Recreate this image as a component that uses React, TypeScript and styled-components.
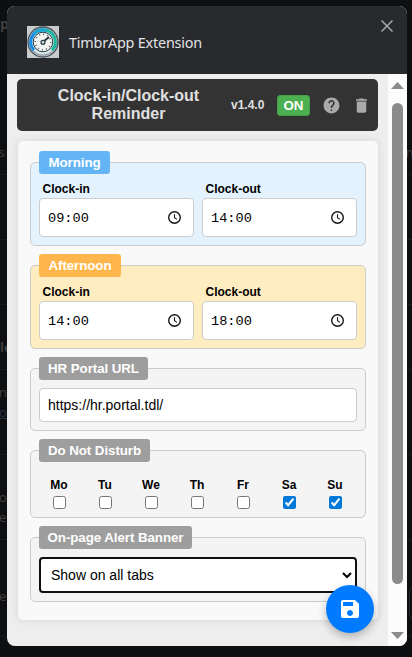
import React, { useState } from "react";
import styled, { createGlobalStyle } from "styled-components";

const GlobalStyle = createGlobalStyle`
  * { box-sizing: border-box; }
  html, body { margin: 0; height: 100%; overflow: hidden; background: #0e0f11; }
  body { font-family: "Liberation Sans", Arial, sans-serif; }
`;

const Screen = styled.div`
  position: relative;
  width: 412px;
  height: 657px;
  overflow: hidden;
  background: #0e0f11;
`;

/* Dimmed page that stays visible around the popup */
const Backdrop = styled.div`
  position: absolute;
  inset: 0;
  color: #3e3f42;
  font: 14px/20px "Open Sans", sans-serif;
`;
const BackdropRow = styled.div<{ $h: number; $top: number; $plain?: boolean }>`
  display: flex;
  justify-content: space-between;
  height: ${(p) => p.$h}px;
  padding-top: ${(p) => p.$top}px;
  border-bottom: ${(p) => (p.$plain ? "0" : "1px solid #1a1b1d")};
  overflow: hidden;
`;
const BackdropText = styled.div<{ $bold?: boolean; $shift?: number; $size?: number }>`
  font-weight: ${(p) => (p.$bold ? 700 : 400)};
  font-size: ${(p) => p.$size ?? 14}px;
  margin-left: ${(p) => p.$shift ?? 0}px;
`;
const BackdropSplit = styled.div`
  display: flex;
  justify-content: space-between;
  width: 419px;
  flex: none;
`;
const BackdropButton = styled.div`
  flex: none;
  width: 40px;
  height: 34px;
  margin: 0 -37px 0 0;
  border: 1px solid #2a2b2e;
  border-radius: 6px;
`;
const BackdropLink = styled.span`
  color: #263344;
  text-decoration: underline;
`;

const Popup = styled.section`
  position: relative;
  display: flex;
  flex-direction: column;
  width: 400px;
  height: 640px;
  margin: 6px 0 0 7px;
  border-radius: 8px;
  overflow: hidden;
  background: #eee;
`;
const TitleBar = styled.header`
  display: flex;
  align-items: center;
  flex: 0 0 68px;
  padding: 4px 12px 0 20px;
  background: #292a2d;
`;
const AppName = styled.span`
  flex: 1;
  margin-left: 10px;
  padding-top: 1px;
  color: #e2e3e5;
  font: 14.4px/20px "Noto Sans", "Open Sans", sans-serif;
  letter-spacing: -0.2px;
`;
const PlainButton = styled.button`
  display: flex;
  padding: 0;
  border: 0;
  background: none;
`;
const CloseButton = styled(PlainButton)`
  align-self: flex-start;
  margin-top: 9px;
  margin-right: 1px;
`;
const Body = styled.div`
  display: flex;
  flex: 1;
  min-height: 0;
`;
const Content = styled.main`
  flex: 1;
  min-width: 0;
  padding: 5px 10px 0;
`;

const Banner = styled.div`
  display: flex;
  align-items: center;
  height: 52px;
  border-radius: 5px;
  background: #333;
  color: #e0e0e0;
`;
const Heading = styled.h1`
  flex: none;
  width: 179px;
  margin: 0 0 0 22px;
  font-size: 16px;
  line-height: 18px;
  text-align: center;
`;
const Version = styled.span`
  flex: none;
  margin-left: 13px;
  width: 46px;
  font-size: 12px;
  font-weight: 700;
`;
const Status = styled.span`
  flex: none;
  width: 33px;
  height: 21px;
  border: 1px solid #449d48;
  border-radius: 3px;
  background: #4caf50;
  color: #fff;
  font-size: 13.33px;
  font-weight: 700;
  line-height: 19px;
  text-align: center;
`;
const IconButton = styled(PlainButton)<{ $gap: number }>`
  flex: none;
  margin-left: ${(p) => p.$gap}px;
`;

const Card = styled.form`
  display: flex;
  flex-direction: column;
  gap: 19px;
  height: 479px;
  margin: 10px 0 0 1px;
  padding: 21px 12px 0;
  border-radius: 5px;
  background: #f9f9f9;
  box-shadow: 0 0 10px rgba(0, 0, 0, 0.1);
`;
const Group = styled.div<{ $h: number; $bg?: string }>`
  height: ${(p) => p.$h}px;
  padding: 0 8px;
  border: 1px solid #ccc;
  border-radius: 5px;
  background: ${(p) => p.$bg ?? "#f4f4f4"};
`;
const Legend = styled.div<{ $w: number; $bg?: string }>`
  width: ${(p) => p.$w}px;
  height: 23px;
  margin-top: -12px;
  border-radius: 3px;
  background: ${(p) => p.$bg ?? "#9e9e9e"};
  color: #fff;
  font-size: 13.33px;
  font-weight: 700;
  line-height: 23px;
  letter-spacing: -0.07px;
  text-align: center;
  white-space: nowrap;
`;
const Times = styled.div`
  display: flex;
  gap: 8px;
`;
const Field = styled.label`
  display: flex;
  flex: 1;
  min-width: 0;
  flex-direction: column;
  font-size: 12px;
  font-weight: 700;
  color: #000;
`;
const Caption = styled.span`
  height: 24px;
  padding: 8px 0 0 3.5px;
  line-height: 14px;
`;
const TimeBox = styled.span`
  display: flex;
  align-items: center;
  height: 39px;
  padding: 0 11px 0 8px;
  border: 1px solid #ccc;
  border-radius: 4px;
  background: #fff;
`;
const TimeInput = styled.input`
  flex: 1;
  min-width: 0;
  padding: 1px 0 0;
  border: 0;
  outline: 0;
  background: none;
  color: #000;
  font: 13.6px "Liberation Mono", monospace;
`;
const UrlInput = styled.input`
  display: block;
  width: 100%;
  height: 34px;
  margin-top: 8px;
  padding: 0 8px;
  border: 1px solid #ccc;
  border-radius: 4px;
  outline: 0;
  background: #fff;
  color: #000;
  font: 14px "Liberation Sans", Arial, sans-serif;
`;
const Days = styled.div`
  display: flex;
  justify-content: space-between;
  padding: 16px 0 0;
  margin: 0 -1px 0 -3px;
`;
const Day = styled.label`
  display: flex;
  flex-direction: column;
  align-items: center;
  width: 46px;
  gap: 3px;
  font-size: 12px;
  font-weight: 700;
  line-height: 15px;
`;
const Check = styled.input`
  width: 13px;
  height: 13px;
  margin: 0;
  accent-color: #0078d7;
`;
const Select = styled.select`
  display: block;
  width: 100%;
  height: 36px;
  margin-top: 8px;
  padding: 0 0 0 6px;
  border: 2px solid #101010;
  border-radius: 4px;
  outline: 0;
  background: #fff;
  color: #000;
  font: 14px "Liberation Sans", Arial, sans-serif;
`;

const Scrollbar = styled.div`
  display: flex;
  flex: none;
  flex-direction: column;
  align-items: center;
  width: 19px;
  padding: 8px 0 7px;
  background: #fcfcfc;
`;
const Thumb = styled.div`
  width: 11px;
  height: 481px;
  margin: 14px 0 auto;
  border-radius: 6px;
  background: #8b8b8b;
`;
const SaveButton = styled(PlainButton)`
  position: absolute;
  right: 33px;
  bottom: 13px;
  align-items: center;
  justify-content: center;
  width: 48px;
  height: 48px;
  border-radius: 50%;
  background: #007bff;
  box-shadow: 0 4px 8px rgba(0, 0, 0, 0.25);
`;

const GaugeLogo = () => (
  <svg width="32" height="32" viewBox="0 0 32 32">
    <rect width="32" height="32" fill="#c9cccc" />
    <circle cx="16" cy="16" r="15" fill="#b5bec4" stroke="#46525c" strokeWidth="1.3" />
    <circle cx="16" cy="16" r="13.2" fill="#dce3e6" stroke="#71818c" strokeWidth="0.8" />
    <path d="M7 24.2A12 12 0 0 1 16 4" fill="none" stroke="#168fe4" strokeWidth="3" />
    <path d="M16 4A12 12 0 0 1 25 24.2" fill="none" stroke="#19b99f" strokeWidth="3" />
    <path d="M7.5 7.5A12 12 0 0 1 20 4.6" fill="none" stroke="#18a9d4" strokeWidth="3" />
    <circle cx="16" cy="16" r="9.8" fill="#f4f5f3" stroke="#263e4a" strokeWidth="1" />
    <circle cx="16" cy="16" r="7.8" fill="none" stroke="#4f5a5e" strokeWidth="1.6" strokeDasharray="1 3.08" />
    <path d="M16 16l6-5" stroke="#202f36" strokeWidth="1.7" />
    <circle cx="16" cy="16.3" r="2" fill="#dfe5e5" stroke="#2b3d46" strokeWidth="1.3" />
  </svg>
);
const ClockIcon = () => (
  <svg width="15" height="15" viewBox="0 0 15 15" fill="none" stroke="#151515">
    <circle cx="7.5" cy="7.5" r="5.8" strokeWidth="1.4" />
    <path d="M7.5 4.2v3.6l2.5 1.6" strokeWidth="1.1" />
  </svg>
);
const HelpIcon = () => (
  <svg width="19" height="19" viewBox="0 0 24 24" fill="#aaa">
    <path d="M12 2C6.48 2 2 6.48 2 12s4.48 10 10 10 10-4.48 10-10S17.52 2 12 2zm1 17h-2v-2h2v2zm2.07-7.75-.9.92C13.45 12.9 13 13.5 13 15h-2v-.5c0-1.1.45-2.1 1.17-2.83l1.24-1.26c.37-.36.59-.86.59-1.41 0-1.1-.9-2-2-2s-2 .9-2 2H8c0-2.21 1.79-4 4-4s4 1.79 4 4c0 .88-.36 1.68-.93 2.25z" />
  </svg>
);
const TrashIcon = () => (
  <svg width="19" height="19" viewBox="0 0 24 24" fill="#aaa">
    <path d="M6 19c0 1.1.9 2 2 2h8c1.1 0 2-.9 2-2V7H6v12zM19 4h-3.5l-1-1h-5l-1 1H5v2h14V4z" />
  </svg>
);
const SaveIcon = () => (
  <svg width="24" height="24" viewBox="0 0 24 24" fill="#fff">
    <path d="M17 3H5c-1.11 0-2 .9-2 2v14c0 1.1.89 2 2 2h14c1.1 0 2-.9 2-2V7l-4-4zm-5 16c-1.66 0-3-1.34-3-3s1.34-3 3-3 3 1.34 3 3-1.34 3-3 3zm3-10H5V5h10v4z" />
  </svg>
);
const Arrow = ({ down }: { down?: boolean }) => (
  <svg width="13" height="7" viewBox="0 0 13 7" fill="#8b8b8b">
    <path d={down ? "M0 0h13L6.5 7z" : "M0 7h13L6.5 0z"} />
  </svg>
);

type ShiftProps = { name: string; width: number; bg: string; tag: string; start: string; end: string };
const Shift = ({ name, width, bg, tag, start, end }: ShiftProps) => (
  <Group $h={84} $bg={bg}>
    <Legend $w={width} $bg={tag}>{name}</Legend>
    <Times>
      {[["Clock-in", start], ["Clock-out", end]].map(([label, value]) => (
        <Field key={label}>
          <Caption>{label}</Caption>
          <TimeBox>
            <TimeInput defaultValue={value} />
            <ClockIcon />
          </TimeBox>
        </Field>
      ))}
    </Times>
  </Group>
);

const days = ["Mo", "Tu", "We", "Th", "Fr", "Sa", "Su"];

export default function App() {
  const [quiet, setQuiet] = useState<string[]>(["Sa", "Su"]);
  const toggle = (d: string) =>
    setQuiet((q) => (q.includes(d) ? q.filter((x) => x !== d) : [...q, d]));

  return (
    <Screen>
      <GlobalStyle />
      <Backdrop>
        <BackdropRow $h={119} $top={14} $plain>
          <BackdropText $bold>p</BackdropText>
        </BackdropRow>
        <BackdropRow $h={56} $top={24}>
          <BackdropSplit>
            <BackdropText $shift={-1} $size={12}>s</BackdropText>
            <BackdropText $size={12}>nc</BackdropText>
          </BackdropSplit>
        </BackdropRow>
        <BackdropRow $h={65} $top={0} />
        <BackdropRow $h={65} $top={0} />
        <BackdropRow $h={65} $top={32}>
          <BackdropText $bold $size={13}>le</BackdropText>
        </BackdropRow>
        <BackdropRow $h={85} $top={12}>
          <BackdropText $shift={-1} $size={13}>
            ni<br /><BackdropLink>or</BackdropLink>
          </BackdropText>
        </BackdropRow>
        <BackdropRow $h={85} $top={32}>
          <BackdropText $shift={-1} $size={13}>og<br />e</BackdropText>
        </BackdropRow>
        <BackdropRow $h={97} $top={46}>
          <BackdropText $shift={-1} $size={13}>er</BackdropText>
          <BackdropButton />
        </BackdropRow>
      </Backdrop>
      <Popup>
        <TitleBar>
          <GaugeLogo />
          <AppName>TimbrApp Extension</AppName>
          <CloseButton aria-label="Close">
            <svg width="14" height="14" viewBox="0 0 14 14" stroke="#a6a8ac" strokeWidth="1.5">
              <path d="M1.5 1.5l11 11M12.5 1.5l-11 11" />
            </svg>
          </CloseButton>
        </TitleBar>
        <Body>
          <Content>
            <Banner>
              <Heading>Clock-in/Clock-out Reminder</Heading>
              <Version>v1.4.0</Version>
              <Status>ON</Status>
              <IconButton $gap={12} aria-label="Help"><HelpIcon /></IconButton>
              <IconButton $gap={11} aria-label="Delete"><TrashIcon /></IconButton>
            </Banner>
            <Card>
              <Shift name="Morning" width={71} bg="#e3f2fd" tag="#64b5f6" start="09:00" end="14:00" />
              <Shift name="Afternoon" width={82} bg="#fdedc0" tag="#ffb74d" start="14:00" end="18:00" />
              <Group $h={63}>
                <Legend $w={109}>HR Portal URL</Legend>
                <UrlInput defaultValue="https://hr.portal.tdl/" />
              </Group>
              <Group $h={68}>
                <Legend $w={111}>Do Not Disturb</Legend>
                <Days>
                  {days.map((d) => (
                    <Day key={d}>
                      {d}
                      <Check type="checkbox" checked={quiet.includes(d)} onChange={() => toggle(d)} />
                    </Day>
                  ))}
                </Days>
              </Group>
              <Group $h={65}>
                <Legend $w={153}>On-page Alert Banner</Legend>
                <Select><option>Show on all tabs</option></Select>
              </Group>
            </Card>
          </Content>
          <Scrollbar>
            <Arrow />
            <Thumb />
            <Arrow down />
          </Scrollbar>
        </Body>
        <SaveButton aria-label="Save"><SaveIcon /></SaveButton>
      </Popup>
    </Screen>
  );
}
